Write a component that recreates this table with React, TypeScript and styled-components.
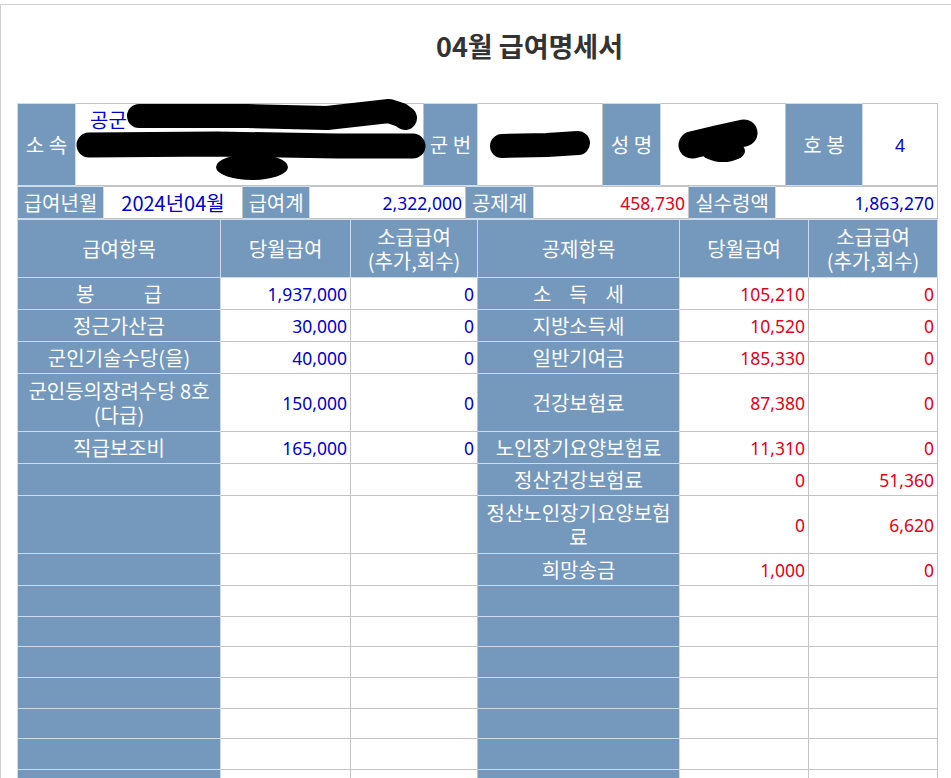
import React from "react";
import styled, { createGlobalStyle } from "styled-components";

const FONT = `"Noto Sans CJK KR", "Noto Sans", sans-serif`;
const NUM_FONT = `"Noto Sans", "Noto Sans CJK KR", sans-serif`;

const GlobalStyle = createGlobalStyle`
  html, body { margin: 0; padding: 0; background: #fff; }
  body { font-family: ${FONT}; }
`;

const Frame = styled.div`
  margin-top: 4px;
  border-top: 1px solid #d2d2d2;
  border-left: 1px solid #d2d2d2;
  min-height: 790px;
  padding-left: 16px;
  box-sizing: border-box;
`;

const Title = styled.h1`
  margin: 0;
  height: 98px;
  padding: 24px 0 0 419px;
  box-sizing: border-box;
  font: 700 27px/34px ${FONT};
  color: #333;
`;

const Sheet = styled.div`
  position: relative;
  width: 920px;
`;

const Grid = styled.table`
  width: 920px;
  border-collapse: collapse;
  table-layout: fixed;
`;

const Row = styled.tr<{ $h: number }>`
  height: ${(p) => p.$h}px;
`;

type Tone = "blue" | "red";

const Cell = styled.td<{ $head?: boolean; $align?: "left" | "center" | "right"; $tone?: Tone }>`
  padding: 3px 3px 2px;
  border: 1px solid ${(p) => (p.$head ? "#cddbea" : "#c4c4c4")};
  background: ${(p) => (p.$head ? "#7598bd" : "#fff")};
  color: ${(p) => (p.$head ? "#fff" : p.$tone === "red" ? "#e0001b" : "#0000cc")};
  font: ${(p) => (p.$head ? `20px/24px ${FONT}` : `17.5px/24px ${NUM_FONT}`)};
  text-align: ${(p) => p.$align ?? "center"};
  vertical-align: middle;
  white-space: pre;
  overflow: hidden;
`;

const DateCell = styled(Cell)`
  font: 20px/24px ${FONT};
`;

const AffiliationCell = styled(Cell)`
  vertical-align: top;
  text-align: left;
  padding: 4px 3px 2px 14px;
  font: 20px/24px ${FONT};
`;

const Redaction = styled.svg`
  position: absolute;
  left: 0;
  top: 0;
  width: 920px;
  height: 120px;
  pointer-events: none;
  overflow: visible;
`;

const Cols: React.FC<{ widths: number[] }> = ({ widths }) => (
  <colgroup>
    {widths.map((w, i) => (
      <col key={i} style={{ width: w }} />
    ))}
  </colgroup>
);

type Item = { name: React.ReactNode; cur: string; back: string; tall?: boolean };

const pay: Item[] = [
  { name: "봉           급", cur: "1,937,000", back: "0" },
  { name: "정근가산금", cur: "30,000", back: "0" },
  { name: "군인기술수당(을)", cur: "40,000", back: "0" },
  { name: <>군인등의장려수당 8호<br />(다급)</>, cur: "150,000", back: "0", tall: true },
  { name: "직급보조비", cur: "165,000", back: "0" },
];

const deduct: Item[] = [
  { name: "소    득    세", cur: "105,210", back: "0" },
  { name: "지방소득세", cur: "10,520", back: "0" },
  { name: "일반기여금", cur: "185,330", back: "0" },
  { name: "건강보험료", cur: "87,380", back: "0" },
  { name: "노인장기요양보험료", cur: "11,310", back: "0" },
  { name: "정산건강보험료", cur: "0", back: "51,360" },
  { name: <>정산노인장기요양보험<br />료</>, cur: "0", back: "6,620", tall: true },
  { name: "희망송금", cur: "1,000", back: "0" },
];

const TOTAL_ROWS = 16;

export default function App() {
  const rows = Array.from({ length: TOTAL_ROWS }, (_, i) => ({ l: pay[i], r: deduct[i] }));
  return (
    <>
      <GlobalStyle />
      <Frame>
        <Title>04월 급여명세서</Title>
        <Sheet>
          <Grid>
            <Cols widths={[58, 348, 54, 125, 58, 125, 77, 75]} />
            <tbody>
              <Row $h={82}>
                <Cell $head>소 속</Cell>
                <AffiliationCell>공군</AffiliationCell>
                <Cell $head>군 번</Cell>
                <Cell> </Cell>
                <Cell $head>성 명</Cell>
                <Cell> </Cell>
                <Cell $head>호 봉</Cell>
                <Cell>4</Cell>
              </Row>
            </tbody>
          </Grid>
          <Grid>
            <Cols widths={[86, 139, 67, 156, 68, 155, 87, 162]} />
            <tbody>
              <Row $h={32}>
                <Cell $head>급여년월</Cell>
                <DateCell>2024년04월</DateCell>
                <Cell $head>급여계</Cell>
                <Cell $align="right">2,322,000</Cell>
                <Cell $head>공제계</Cell>
                <Cell $align="right" $tone="red">458,730</Cell>
                <Cell $head>실수령액</Cell>
                <Cell $align="right">1,863,270</Cell>
              </Row>
            </tbody>
          </Grid>
          <Grid>
            <Cols widths={[203, 130, 127, 202, 129, 129]} />
            <tbody>
              <Row $h={58}>
                <Cell $head>급여항목</Cell>
                <Cell $head>당월급여</Cell>
                <Cell $head>소급급여{"\n"}(추가,회수)</Cell>
                <Cell $head>공제항목</Cell>
                <Cell $head>당월급여</Cell>
                <Cell $head>소급급여{"\n"}(추가,회수)</Cell>
              </Row>
              {rows.map(({ l, r }, i) => (
                <Row key={i} $h={l?.tall || r?.tall ? 58 : l || r ? 32 : 30.67}>
                  <Cell $head>{l?.name ?? ""}</Cell>
                  <Cell $align="right">{l?.cur ?? ""}</Cell>
                  <Cell $align="right">{l?.back ?? ""}</Cell>
                  <Cell $head>{r?.name ?? ""}</Cell>
                  <Cell $align="right" $tone="red">{r?.cur ?? ""}</Cell>
                  <Cell $align="right" $tone="red">{r?.back ?? ""}</Cell>
                </Row>
              ))}
            </tbody>
          </Grid>
          <Redaction viewBox="0 0 920 120">
            <g fill="none" stroke="#000" strokeLinecap="round" strokeLinejoin="round">
              <path d="M122 13 L230 13 L310 15 L372 8 L384 12 L388 15" strokeWidth={24} />
              <path d="M72 42 L200 41 L320 43 L396 43" strokeWidth={25} />
              <path d="M485 43 L530 42 L561 40" strokeWidth={24} />
              <path d="M675 42 L700 36 L727 30" strokeWidth={27} />
            </g>
            <g fill="#000">
              <ellipse cx={235} cy={64} rx={36} ry={13} />
              <ellipse cx={706} cy={48} rx={22} ry={11} />
            </g>
          </Redaction>
        </Sheet>
      </Frame>
    </>
  );
}
